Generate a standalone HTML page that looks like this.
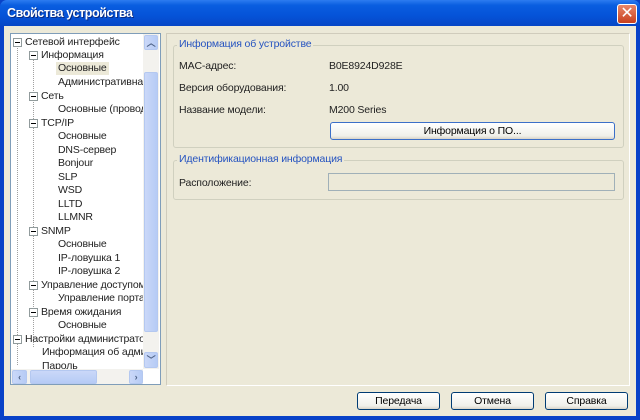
<!DOCTYPE html>
<html><head><meta charset="utf-8"><style>
*{margin:0;padding:0;box-sizing:border-box}
body{width:640px;height:420px;overflow:hidden;background:#0842c8;font-family:"Liberation Sans","DejaVu Sans",sans-serif;font-size:10.5px;letter-spacing:-0.15px;color:#000;position:relative}
.abs{position:absolute}
#title{left:0;top:0;width:640px;height:26px;background:linear-gradient(#2d7cf0 0%,#0a5ee0 20%,#0553d8 60%,#0647c6 100%);border-radius:7px 7px 0 0}
#title span{position:absolute;left:7px;top:6px;color:#fff;font-weight:bold;font-size:12.5px;letter-spacing:-0.4px;text-shadow:1px 1px #0a2a80}
#close{left:617px;top:4px;width:20px;height:20px;background:linear-gradient(#e8876a,#c8401e);border:1px solid #fff;border-radius:3px;color:#fff;font-size:16px;line-height:17px;text-align:center;font-weight:bold}
#body{left:4px;top:26px;width:632px;height:390px;background:#ece9d8}
#tree{left:10px;top:33px;width:151px;height:352px;background:#fff;border:1px solid #7f9db9;overflow:hidden}
.r{position:absolute;white-space:nowrap;line-height:13px;color:#222}
.pm{position:absolute;width:9px;height:9px;border:1px solid #919b9c;background:#fff}
.pm:after{content:"";position:absolute;left:1px;top:3px;width:5px;height:1px;background:#000}
#vs{left:143px;top:34px;width:16px;height:335px;background:#f3f2ee}
#hs{left:11px;top:369px;width:132px;height:15px;background:#f3f2ee}
.sb{position:absolute;background:linear-gradient(90deg,#cad8f8,#b6cbf5);border:1px solid #b4c8f0;border-radius:2px;color:#4d6185;font-size:9px;text-align:center;font-weight:bold}
#right{left:166px;top:33px;width:464px;height:353px;border:1px solid #d0ccbc;border-right-color:#fff;border-bottom-color:#fff}
.grp{position:absolute;border:1px solid #d0d0bf;border-radius:3px}
.gt{position:absolute;background:#ece9d8;color:#2553c0;padding:0 2px}
.lbl{position:absolute;color:#222}
.btn{position:absolute;border:1px solid #003c74;border-radius:3px;background:linear-gradient(#fff,#f0f0ea 80%,#d8d4c8);text-align:center;line-height:17px}
</style></head><body>
<div id="title" class="abs"><span>Свойства устройства</span></div>
<div id="close" class="abs">✕</div>
<div id="body" class="abs"></div>
<div id="tree" class="abs"></div>
<div class="abs" style="left:10px;top:33px;width:133px;height:336px;overflow:hidden">
<div class="abs" style="left:7px;top:12px;width:1px;height:320px;border-left:1px dotted #a0a0a0"></div>
<div class="abs" style="left:23px;top:24px;width:1px;height:290px;border-left:1px dotted #a0a0a0"></div>
<div class="pm" style="left:3px;top:5px"></div><div class="r" style="left:15px;top:3px">Сетевой интерфейс</div>
<div class="pm" style="left:19px;top:18px"></div><div class="r" style="left:31px;top:16px">Информация</div>
<div class="r" style="left:46px;top:29px;background:#ece9d8;padding:0 2px">Основные</div>
<div class="r" style="left:48px;top:43px">Административная</div>
<div class="pm" style="left:19px;top:59px"></div><div class="r" style="left:31px;top:57px">Сеть</div>
<div class="r" style="left:48px;top:70px">Основные (проводн</div>
<div class="pm" style="left:19px;top:86px"></div><div class="r" style="left:31px;top:84px">TCP/IP</div>
<div class="r" style="left:48px;top:97px">Основные</div>
<div class="r" style="left:48px;top:111px">DNS-сервер</div>
<div class="r" style="left:48px;top:124px">Bonjour</div>
<div class="r" style="left:48px;top:138px">SLP</div>
<div class="r" style="left:48px;top:151px">WSD</div>
<div class="r" style="left:48px;top:165px">LLTD</div>
<div class="r" style="left:48px;top:178px">LLMNR</div>
<div class="pm" style="left:19px;top:194px"></div><div class="r" style="left:31px;top:192px">SNMP</div>
<div class="r" style="left:48px;top:205px">Основные</div>
<div class="r" style="left:48px;top:219px">IP-ловушка 1</div>
<div class="r" style="left:48px;top:232px">IP-ловушка 2</div>
<div class="pm" style="left:19px;top:248px"></div><div class="r" style="left:31px;top:246px">Управление доступом</div>
<div class="r" style="left:48px;top:259px">Управление портам</div>
<div class="pm" style="left:19px;top:275px"></div><div class="r" style="left:31px;top:273px">Время ожидания</div>
<div class="r" style="left:48px;top:286px">Основные</div>
<div class="pm" style="left:3px;top:302px"></div><div class="r" style="left:15px;top:300px">Настройки администратора</div>
<div class="r" style="left:32px;top:313px">Информация об админи</div>
<div class="r" style="left:32px;top:327px">Пароль</div>
</div>
<div id="vs" class="abs"></div>
<div class="sb" style="left:144px;top:35px;width:14px;height:15px">︿</div>
<div class="sb" style="left:144px;top:72px;width:14px;height:260px"></div>
<div class="sb" style="left:144px;top:352px;width:14px;height:16px">﹀</div>
<div id="hs" class="abs"></div>
<div class="sb" style="left:12px;top:370px;width:15px;height:14px;line-height:12px">‹</div>
<div class="sb" style="left:30px;top:370px;width:67px;height:14px;background:linear-gradient(#cad8f8,#b6cbf5)"></div>
<div class="sb" style="left:129px;top:370px;width:14px;height:14px;line-height:12px">›</div>
<div id="right" class="abs"></div>
<div class="grp" style="left:173px;top:45px;width:451px;height:103px"></div>
<div class="gt" style="left:177px;top:38px">Информация об устройстве</div>
<div class="lbl" style="left:179px;top:60px">MAC-адрес:</div>
<div class="lbl" style="left:329px;top:60px">B0E8924D928E</div>
<div class="lbl" style="left:179px;top:82px">Версия оборудования:</div>
<div class="lbl" style="left:329px;top:82px">1.00</div>
<div class="lbl" style="left:179px;top:104px">Название модели:</div>
<div class="lbl" style="left:329px;top:104px">M200 Series</div>
<div class="btn" style="left:330px;top:122px;width:285px;height:18px;border-color:#3b6fc8">Информация о ПО...</div>
<div class="grp" style="left:173px;top:160px;width:451px;height:40px"></div>
<div class="gt" style="left:177px;top:153px">Идентификационная информация</div>
<div class="lbl" style="left:179px;top:177px">Расположение:</div>
<div class="abs" style="left:328px;top:173px;width:287px;height:18px;border:1px solid #a0b0b8;background:#ece9d8"></div>
<div class="btn" style="left:357px;top:392px;width:83px;height:18px">Передача</div>
<div class="btn" style="left:451px;top:392px;width:83px;height:18px">Отмена</div>
<div class="btn" style="left:545px;top:392px;width:83px;height:18px">Справка</div>
</body></html>
